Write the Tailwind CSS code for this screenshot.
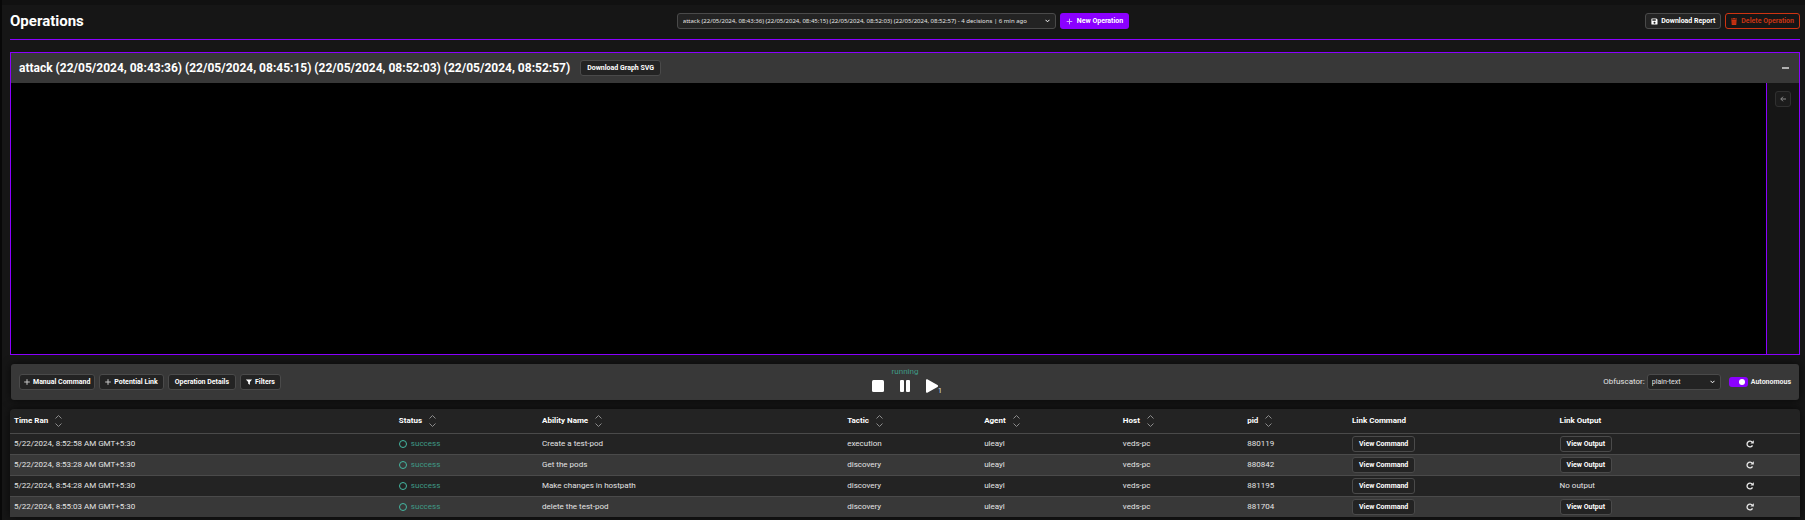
<!DOCTYPE html>
<html lang="en">
<head>
<meta charset="utf-8">
<title>Operations</title>
<script src="https://cdn.jsdelivr.net/npm/@tailwindcss/browser@4"></script>
</head>
<body class="min-h-screen border-l-2 border-[#080808] bg-[#161616] font-['Roboto',sans-serif] text-[8px] leading-4 text-[#e4e4e4]">
<div class="h-[5px] bg-[#111111]"></div>
<main class="pt-2 pr-[5px] pl-2">
  <header class="grid grid-cols-[1fr_auto_1fr] items-center border-b border-[#8b00ff] pb-2.5">
    <h1 class="text-[15px] leading-4 font-bold text-white">Operations</h1>
    <div class="mr-1 flex gap-1">
      <div class="relative">
        <select aria-label="Operation" class="block h-4 w-[379px] appearance-none rounded-[3px] border border-[#4a4a4a] bg-[#232323] pl-[5px] font-['Noto_Sans',sans-serif] text-[6px] leading-[14px] text-[#e4e4e4]">
          <option>attack (22/05/2024, 08:43:36) (22/05/2024, 08:45:15) (22/05/2024, 08:52:03) (22/05/2024, 08:52:57) - 4 decisions | 6 min ago</option>
        </select>
        <svg class="pointer-events-none absolute top-1.5 right-1.5 h-1 w-[5px]" viewBox="0 0 5 4" fill="none" stroke="#fff"><path d="M.5 .8l2 2 2-2"/></svg>
      </div>
      <button class="flex h-4 items-center gap-1 rounded-[3px] bg-[#8b00ff] px-1.5 text-[7px] font-bold text-white"><svg class="size-[7px]" viewBox="0 0 7 7" stroke="#d4a8ff"><path d="M3.5 .7v5.6M.7 3.5h5.6"/></svg>New Operation</button>
    </div>
    <div class="flex justify-end gap-1">
      <button class="flex h-4 items-center gap-[3px] rounded-[3px] border border-[#4a4a4a] bg-[#232323] px-[5px] text-[7px] font-bold text-white"><svg class="size-[7px]" viewBox="0 0 7 7" fill="#fff"><path fill-rule="evenodd" d="M1 .4h4.400L6.500 1.500V6a.6.6 0 0 1-.6.6H1A.6.6 0 0 1 .4 6V1a.6.600 0 0 1 .6-.6zM1.400 1.200v1.500h3.400V1.200zM3.500 3.700a1 1 0 1 0 0 2 1 1 0 0 0 0-2z"/></svg>Download Report</button>
      <button class="flex h-4 items-center gap-1 rounded-[3px] border border-[#cf3412] px-[5px] text-[7px] font-bold text-[#c93413]"><svg class="h-[7px] w-1.5" viewBox="0 0 6 7"><path fill="#cf3412" d="M0 .5h2L2.300 0h1.400L4 .5h2v1H0zM.4 2h5.200L5.300 6.500a.5.5 0 0 1-.5.5H1.200a.5.5 0 0 1-.5-.5z"/><path stroke="#8a2612" stroke-width=".5" d="M2 2.800v3.200M4 2.800v3.200"/></svg>Delete Operation</button>
    </div>
  </header>

  <section class="mt-3 border border-[#8b00ff]">
    <div class="flex h-[30px] items-center gap-2.5 bg-[#383838] pr-2.5 pl-2">
      <h2 class="text-[12px] leading-4 font-bold text-white">attack (22/05/2024, 08:43:36) (22/05/2024, 08:45:15) (22/05/2024, 08:52:03) (22/05/2024, 08:52:57)</h2>
      <button class="h-4 rounded-[3px] border border-[#4a4a4a] bg-[#232323] px-1.5 text-[7px] leading-[14px] font-bold text-white">Download Graph SVG</button>
      <button aria-label="Collapse" class="ml-auto"><svg class="h-2 w-[7px]" viewBox="0 0 7 8"><path fill="#b0b0b0" d="M0 3h7v2H0z"/></svg></button>
    </div>
    <div class="flex h-[271px]">
      <div class="flex-1 bg-black"></div>
      <aside class="w-[33px] border-l border-[#8b00ff] pt-2 pl-2">
        <button aria-label="Open legend" class="grid size-4 place-items-center rounded-[3px] border border-[#303030] bg-[#1c1c1c]"><svg class="size-1.5" viewBox="0 0 6 6" fill="none" stroke="#8a8a8a"><path d="M3 .7L.8 3 3 5.300M.8 3H6"/></svg></button>
      </aside>
    </div>
  </section>

  <section class="mx-px mt-[9px] grid h-9 grid-cols-[1fr_auto_1fr] items-center rounded-[3px] bg-[#383838] px-2 shadow-[0_0_8px_#000000b0]">
    <div class="flex gap-1 text-[7px] font-bold text-white">
      <button class="flex h-4 items-center gap-[3px] rounded-[3px] border border-[#4a4a4a] bg-[#232323] px-1"><svg class="size-[6px]" viewBox="0 0 6 6" stroke="#c8c8c8"><path d="M3 .2v5.600M.2 3h5.600"/></svg>Manual Command</button>
      <button class="flex h-4 items-center gap-[3px] rounded-[3px] border border-[#4a4a4a] bg-[#232323] px-[5px]"><svg class="size-[6px]" viewBox="0 0 6 6" stroke="#c8c8c8"><path d="M3 .2v5.600M.2 3h5.600"/></svg>Potential Link</button>
      <button class="flex h-4 items-center rounded-[3px] border border-[#4a4a4a] bg-[#232323] px-1.5">Operation Details</button>
      <button class="flex h-4 items-center gap-[3px] rounded-[3px] border border-[#4a4a4a] bg-[#232323] px-[5px]"><svg class="size-[6px]" viewBox="0 0 6 6" fill="#fff"><path d="M.2.4h5.600a.2.2 0 0 1 .1.4L3.900 3v2.800L2.200 4.700V3L.1.8A.2.2 0 0 1 .2.4z"/></svg>Filters</button>
    </div>
    <div class="flex flex-col items-center pb-[5px]">
      <span class="mb-px leading-3 text-[#3f9a86]">running</span>
      <div class="flex items-center gap-4">
        <button aria-label="Stop"><svg class="block h-[14px] w-3" viewBox="0 0 12 14" fill="#fff"><rect y="1" width="12" height="12" rx="1.500"/></svg></button>
        <button aria-label="Pause"><svg class="block h-[14px] w-2.5" viewBox="0 0 10 14" fill="#fff"><rect y="1" width="4" height="12" rx="1"/><rect x="6" y="1" width="4" height="12" rx="1"/></svg></button>
        <button aria-label="Run one link" class="relative"><svg class="block h-[14px] w-3" viewBox="0 0 12 14" fill="#fff"><path d="M0 1.200C0 .2 1 0 1.700.4L11.500 6.100c.7.4.7 1.400 0 1.800L1.700 13.600C1 14 0 13.800 0 12.800z"/></svg><sub class="absolute -right-1 -bottom-0.5 text-[7px] leading-2 text-[#e4e4e4]">1</sub></button>
      </div>
    </div>
    <div class="flex items-center justify-end">
      <label for="obf" class="mr-0.5">Obfuscator:</label>
      <div class="relative mr-2">
        <select id="obf" class="block h-4 w-[74px] appearance-none rounded-[3px] border border-[#4a4a4a] bg-[#232323] pl-1 text-[7px] leading-[14px] text-[#e4e4e4]"><option>plain-text</option></select>
        <svg class="pointer-events-none absolute top-1.5 right-1.5 h-1 w-[5px]" viewBox="0 0 5 4" fill="none" stroke="#fff"><path d="M.5 .8l2 2 2-2"/></svg>
      </div>
      <input id="auto" type="checkbox" checked class="flex h-2.5 w-[19px] appearance-none items-center justify-end rounded-[3px] bg-[#8b00ff] pr-[3px] before:size-[6px] before:rounded-full before:bg-white">
      <label for="auto" class="ml-[3px] text-[7px] font-bold text-[#f0f0f0]">Autonomous</label>
    </div>
  </section>

  <div class="mt-[9px] overflow-hidden rounded-t-[4px] shadow-[0_0_8px_#000000b0]">
  <table class="w-full table-fixed border-collapse bg-[#232323] text-left">
    <colgroup><col class="w-[21.5%]"><col class="w-[8%]"><col class="w-[17.05%]"><col class="w-[7.65%]"><col class="w-[7.75%]"><col class="w-[6.95%]"><col class="w-[5.85%]"><col class="w-[11.6%]"><col class="w-[10.4%]"><col></colgroup>
    <thead><tr id="head" class="h-6 border-b border-[#4a4a4a] text-white"></tr></thead>
    <tbody id="rows"></tbody>
  </table>
  </div>
</main>
<script>
const sort = '<svg class="h-3 w-[7px]" viewBox="0 0 7 12" fill="none" stroke="#8c8c8c"><path d="M.5 3.500l3-3 3 3M.5 8.500l3 3 3-3"/></svg>';
const heads = ['Time Ran', 'Status', 'Ability Name', 'Tactic', 'Agent', 'Host', 'pid', 'Link Command', 'Link Output', ''];
document.getElementById('head').innerHTML = heads.map((h, i) =>
  `<th class="px-1 py-0 font-bold">${i < 7 ? `<button class="flex items-center gap-[7px]">${h}${sort}</button>` : h}</th>`).join('');
const btn = t => `<button class="block h-4 rounded-[3px] border border-[#4a4a4a] bg-[#232323] px-1.5 text-[7px] leading-[14px] font-bold text-white">${t}</button>`;
const redo = '<button aria-label="Rerun" class="block"><svg class="size-2" viewBox="0 0 8 8" fill="none" stroke="#e8e8e8" stroke-width="1.300"><path d="M6.500 5.400A2.900 2.900 0 1 1 6.300 2.300"/><path d="M7.800.2v3.400H4.400z" fill="#e8e8e8" stroke="none"/></svg></button>';
const data = [
  ['5/22/2024, 8:52:58 AM GMT+5:30', 'Create a test-pod', 'execution', '880119', true],
  ['5/22/2024, 8:53:28 AM GMT+5:30', 'Get the pods', 'discovery', '880842', true],
  ['5/22/2024, 8:54:28 AM GMT+5:30', 'Make changes in hostpath', 'discovery', '881195', false],
  ['5/22/2024, 8:55:03 AM GMT+5:30', 'delete the test-pod', 'discovery', '881704', true]
];
document.getElementById('rows').innerHTML = data.map(([time, name, tactic, pid, out]) => {
  const status = '<span class="flex items-center gap-1 text-[#3f9a86]"><span class="size-2 rounded-full border border-[#44b8a2]"></span>success</span>';
  const cells = [time, status, name, tactic, 'uleayl', 'veds-pc', pid, btn('View Command'), out ? btn('View Output') : 'No output', redo];
  return '<tr class="h-[21px] border-b border-[#4a4a4a] even:bg-[#383838] last:border-b-0">' + cells.map(c => `<td class="px-1 py-0">${c}</td>`).join('') + '</tr>';
}).join('');
</script>
</body>
</html>
